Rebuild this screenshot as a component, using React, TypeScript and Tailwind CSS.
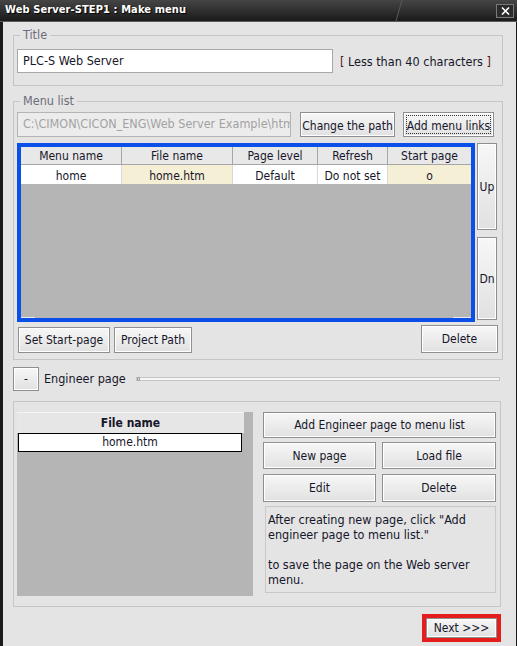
import type { ReactNode } from 'react'

const ink = 'text-[#16162a]'

function Btn({ children, className = '' }: { children: ReactNode; className?: string }) {
  return (
    <div
      className={`flex items-center justify-center whitespace-nowrap border border-[#8f8f8f] bg-linear-to-b from-[#f7f7f7] via-[#ececec] to-[#e1e1e1] shadow-[inset_0_0_0_1px_#ffffff] ${ink} ${className}`}
    >
      {children}
    </div>
  )
}

function Group({ label, children, className = '' }: { label: string; children: ReactNode; className?: string }) {
  return (
    <div className={`relative border border-[#c5c5c5] ${className}`}>
      <span className="absolute -top-[9px] left-[6px] bg-[#e4e4e4] px-[3px] text-[12.5px] leading-[16px] text-[#6c6c7c]">
        {label}
      </span>
      {children}
    </div>
  )
}

const columns = [
  { title: 'Menu name', w: 'w-[101px]', value: 'home', bg: 'bg-white' },
  { title: 'File name', w: 'w-[111px]', value: 'home.htm', bg: 'bg-[#f5efd6]' },
  { title: 'Page level', w: 'w-[85px]', value: 'Default', bg: 'bg-white' },
  { title: 'Refresh', w: 'w-[70px]', value: 'Do not set', bg: 'bg-white' },
  { title: 'Start page', w: 'w-[83px]', value: 'o', bg: 'bg-[#f5efd6]' },
]

export default function App() {
  return (
    <div className="flex h-[646px] w-[517px] flex-col bg-[#1b1b1b] font-['DejaVu_Sans_Condensed','DejaVu_Sans',sans-serif] text-[12px]">
      {/* title bar */}
      <div className="relative flex h-[22px] shrink-0 items-center border-b border-[#5c5c5c] bg-linear-to-b from-[#454545] via-[#303030] to-[#1a1a1a] pl-[5px]">
        <svg className="absolute left-[390px] top-0" width="14" height="21" viewBox="0 0 14 21">
          <line x1="12" y1="0" x2="6" y2="21" stroke="#5a5a5a" strokeWidth="1" />
        </svg>
        <span className="relative text-[11px] font-bold tracking-[0.1px] text-white [text-shadow:1px_1px_1px_#000]">
          Web Server-STEP1 : Make menu
        </span>
        <div className="absolute left-[496px] top-[4px] flex h-[14px] w-[18px] items-center justify-center border border-[#7a7a7a] bg-[#2b2b2b]">
          <svg width="9" height="8" viewBox="0 0 9 8">
            <path d="M1 0.5 L8 7.5 M8 0.5 L1 7.5" stroke="#ffffff" strokeWidth="1.6" />
          </svg>
        </div>
      </div>

      {/* window body */}
      <div className={`ml-[3px] mr-[1px] flex-1 bg-[#e4e4e4] pl-[10px] pt-[13px] ${ink}`}>
        <Group label="Title" className="flex w-[490px] items-center px-[3px] pb-[12px] pt-[13px]">
          <div className="flex h-[24px] w-[316px] items-center border border-[#a8a8a8] bg-white pl-[5px] text-[12.5px]">
            PLC-S Web Server
          </div>
          <span className="ml-[7px] pt-[3px] text-[12.5px]">
            <span className="text-[#5a1414]">[</span> Less than 40 characters <span className="text-[#5a1414]">]</span>
          </span>
        </Group>

        <Group label="Menu list" className="mt-[15px] w-[490px] px-[3px] pb-[6px] pt-[10px]">
          <div className="flex items-center">
            <div className="flex h-[25px] w-[274px] items-center overflow-hidden whitespace-nowrap border border-[#b4b4b4] bg-[#ececec] pl-[5px] text-[12.5px] text-[#a2a2a2]">
              C:\CIMON\CICON_ENG\Web Server Example\htm
            </div>
            <Btn className="ml-[9px] h-[25px] w-[95px] pt-[2px]">Change the path</Btn>
            <Btn className="ml-[8px] h-[25px] w-[91px] pt-[2px] outline-1 -outline-offset-4 outline-dotted outline-[#333]">
              Add menu links
            </Btn>
          </div>

          <div className="mt-[6px] flex">
            <div className="relative h-[179px] w-[458px] border-4 border-[#0a4fe8] bg-[#b5b5b5]">
              <div className="flex h-[18px] bg-[#e8e8e8]">
                {columns.map(c => (
                  <div key={c.title} className={`${c.w} flex items-center justify-center border-b border-r border-[#a6a6a6] last:border-r-0`}>
                    {c.title}
                  </div>
                ))}
              </div>
              <div className="flex h-[19px]">
                {columns.map(c => (
                  <div key={c.title} className={`${c.w} ${c.bg} flex items-center justify-center border-r border-[#d8d8d8] pt-[2px] last:border-r-0`}>
                    {c.value}
                  </div>
                ))}
              </div>
              <div className="absolute bottom-0 left-0 h-px w-[14px] bg-[#e8e8e8]" />
              <div className="absolute bottom-0 right-0 h-px w-[18px] bg-[#e8e8e8]" />
            </div>
            <div className="ml-[2px] flex flex-col">
              <Btn className="h-[87px] w-[20px]">Up</Btn>
              <Btn className="mt-[7px] h-[83px] w-[20px]">Dn</Btn>
            </div>
          </div>

          <div className="mt-[3px] flex items-end">
            <Btn className="ml-[1px] h-[26px] w-[92px]">Set Start-page</Btn>
            <Btn className="ml-[4px] h-[26px] w-[78px]">Project Path</Btn>
            <Btn className="ml-auto mr-[1px] h-[28px] w-[77px]">Delete</Btn>
          </div>
        </Group>

        <div className="mt-[7px] flex items-center">
          <Btn className="h-[24px] w-[26px]">-</Btn>
          <span className="ml-[5px] text-[12.5px]">Engineer page</span>
          <div className="relative ml-[10px] h-[4px] flex-1 mr-[16px] border border-[#c4c4c4] bg-[#f6f6f6]">
            <div className="absolute -top-[1px] left-0 h-[4px] w-[3px] rounded-[1px] border border-[#9a9a9a] bg-[#dcdcdc]" />
          </div>
        </div>

        <div className="mt-[10px] flex w-[488px] border border-[#c5c5c5] px-[3px] pb-[10px] pt-[10px]">
          <div className="h-[184px] w-[236px] bg-[#b5b5b5]">
            <div className="flex h-[21px] w-[227px] items-center justify-center border-t border-[#f4f4f4] bg-[#e6e6e6] font-bold">
              File name
            </div>
            <div className="ml-[1px] flex h-[19px] w-[224px] items-start justify-center border border-black bg-white leading-[16px]">
              home.htm
            </div>
          </div>
          <div className="ml-[10px] flex w-[233px] flex-col">
            <Btn className="h-[26px] w-[233px]">Add Engineer page to menu list</Btn>
            <div className="mt-[4px] flex">
              <Btn className="h-[27px] w-[113px]">New page</Btn>
              <Btn className="ml-[6px] h-[27px] w-[114px]">Load file</Btn>
            </div>
            <div className="mt-[5px] flex">
              <Btn className="h-[28px] w-[113px]">Edit</Btn>
              <Btn className="ml-[6px] h-[28px] w-[114px]">Delete</Btn>
            </div>
            <div className="ml-[2px] mt-[4px] h-[87px] w-[231px] border border-[#c8c8c8] pl-[2px] pt-[5px] text-[12.5px] leading-[15px]">
              After creating new page, click "Add
              <br />
              engineer page to menu list."
              <br />
              <br />
              to save the page on the Web server
              <br />
              menu.
            </div>
          </div>
        </div>

        <div className="ml-[409px] mt-[7px] h-[28px] w-[79px] border-4 border-[#e41d1d]">
          <Btn className="h-full w-full">Next &gt;&gt;&gt;</Btn>
        </div>
      </div>
    </div>
  )
}
